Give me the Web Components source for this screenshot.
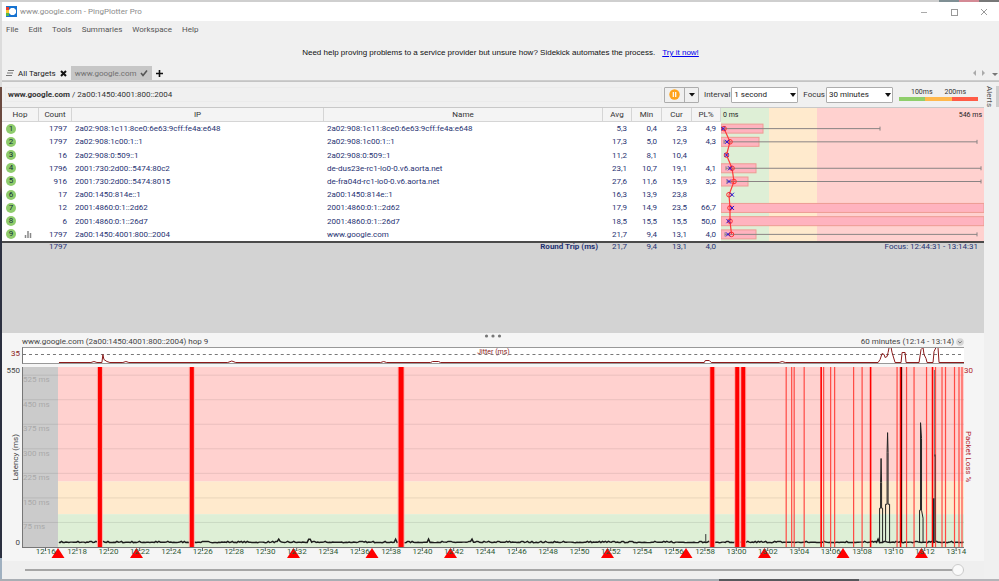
<!DOCTYPE html>
<html lang="en">
<head>
  <meta charset="utf-8">
  <title>www.google.com - PingPlotter Pro</title>
  <style>
    html, body {
      height: 100%;
    }

    body {
      margin: 0;
      font-family: Roboto, "Open Sans", sans-serif;
      font-size: 8px;
      line-height: 11px;
      color: #333;
      overflow: hidden;
    }
  </style>
</head>
<body>
  <ping-window>
    <title-bar slot="title">www.google.com - PingPlotter Pro</title-bar>
    <menu-bar slot="menu" items="File,Edit,Tools,Summaries,Workspace,Help"></menu-bar>
    <promo-banner slot="banner">
      Need help proving problems to a service provider but unsure how? Sidekick automates the process.
      <a slot="action" href="#sidekick">Try it now!</a>
    </promo-banner>
    <target-tabs slot="tabs"></target-tabs>
    <trace-toolbar><b>www.google.com</b> / 2a00:1450:4001:800::2004</trace-toolbar>
    <hop-table></hop-table>
    <timeline-panel></timeline-panel>
    <alerts-rail slot="side">Alerts</alerts-rail>
  </ping-window>

  <script>
    class PingElement extends HTMLElement {
      constructor() {
        super();
        this.attachShadow({ mode: "open" });
      }

      connectedCallback() {
        const template = document.createElement("template");
        template.innerHTML = this.markup();
        this.shadowRoot.replaceChildren(template.content);
      }
    }

    class PingWindow extends PingElement {
      markup() {
        return `
          <style>
            :host {
              display: block;
              box-sizing: border-box;
              height: 100vh;
              padding: 2px 0 2px 2px;
              background:
                linear-gradient(90deg, #a9aeb4 72%, #57585c 72% 86%, #b4b4b8 86%) bottom / 100% 2px no-repeat,
                linear-gradient(90deg, #cfcfcf 0 94%, #7f8f94 94% 96%, #d48a95 96% 98%, #777 98%) top / 100% 2px no-repeat,
                linear-gradient(#dcdcdc 0 15%, #6b4a40 15% 32%, #2b3040 34% 96%, #9fb0c0 96%);
            }

            .window {
              display: flex;
              flex-direction: column;
              height: 100%;
              background: #f0f0f0;
            }

            .work {
              flex: 1;
              min-height: 0;
              display: flex;
              border-top: 1px solid #c4c4c4;
            }

            .main {
              flex: 1;
              min-width: 0;
              display: flex;
              flex-direction: column;
            }
          </style>
          <div class="window">
            <slot name="title"></slot>
            <slot name="menu"></slot>
            <slot name="banner"></slot>
            <slot name="tabs"></slot>
            <div class="work">
              <div class="main"><slot></slot></div>
              <slot name="side"></slot>
            </div>
          </div>
        `;
      }
    }

    class TitleBar extends PingElement {
      markup() {
        return `
          <style>
            :host {
              display: flex;
              align-items: center;
              height: 19px;
              padding-left: 4px;
              background: #fff;
              color: #8c8c8c;
            }

            h1 {
              flex: 1;
              margin: 0 0 0 3px;
              font: inherit;
            }

            button {
              width: 30px;
              height: 19px;
              padding: 0;
              border: none;
              background: none;
            }

            svg {
              display: block;
              margin: auto;
            }
          </style>
          <svg style="margin: 0" width="11" height="11" viewBox="0 0 11 11">
            <rect width="11" height="11" fill="#1673d1"/>
            <rect y="1" width="3" height="3" fill="#e8402c"/>
            <rect y="4" width="3" height="3" fill="#f6c62f"/>
            <rect y="7" width="3" height="3" fill="#58b947"/>
            <path d="M5 2h3l2 2v3l-2 2h-3l-2-2v-3z" fill="#fff"/>
          </svg>
          <h1><slot></slot></h1>
          <button aria-label="Minimize"><svg width="8" height="8"><path d="M1 4.500h6" stroke="#aaa"/></svg></button>
          <button aria-label="Maximize"><svg width="8" height="8"><rect x="1.500" y="1.500" width="6" height="6" fill="none" stroke="#999"/></svg></button>
          <button aria-label="Close"><svg width="8" height="8"><path d="M1 1l6 6M7 1l-6 6" stroke="#999"/></svg></button>
        `;
      }
    }

    class MenuBar extends PingElement {
      markup() {
        const items = this.getAttribute("items").split(",");
        return `
          <style>
            :host {
              display: block;
            }

            nav {
              display: flex;
              gap: 10px;
              height: 16px;
              padding-left: 4px;
            }

            button {
              padding: 0;
              border: none;
              background: none;
              font: inherit;
              color: #555;
            }
          </style>
          <nav>${items.map((item) => `<button>${item}</button>`).join("")}</nav>
        `;
      }
    }

    class PromoBanner extends PingElement {
      markup() {
        return `
          <style>
            :host {
              display: flex;
              justify-content: center;
              align-items: center;
              gap: 7px;
              height: 27px;
              padding-top: 2px;
              font-family: "Liberation Sans", Arial, sans-serif;
              color: #111;
            }

            ::slotted(a) {
              color: #0000ee;
            }
          </style>
          <span><slot></slot></span>
          <slot name="action"></slot>
        `;
      }
    }

    class TargetTabs extends PingElement {
      markup() {
        return `
          <style>
            :host {
              display: flex;
              height: 14px;
              border-bottom: 1px solid #cdcdcd;
            }

            button {
              display: flex;
              align-items: center;
              gap: 4px;
              padding: 0 4px;
              border: none;
              background: none;
              font: inherit;
              color: #222;
            }

            .active {
              gap: 3px;
              background: #c6c6c6;
              color: #707070;
            }

            .arrows {
              display: flex;
              align-items: center;
              margin-left: auto;
            }

            .arrows button {
              padding: 0 3px;
            }
          </style>
          <button>
            <svg width="8" height="8"><path d="M2 1.500h6M1 4h6M0 6.500h6" stroke="#777"/></svg>
            All Targets
            <svg width="7" height="7"><path d="M1 1l5 5M6 1l-5 5" stroke="#111" stroke-width="2"/></svg>
          </button>
          <button class="active">
            www.google.com
            <svg width="8" height="8"><path d="M1 4l2 2.500l4-5" fill="none" stroke="#555" stroke-width="1.600"/></svg>
          </button>
          <button aria-label="Add target"><svg width="7" height="7"><path d="M3.500 0v7M0 3.500h7" stroke="#111" stroke-width="1.600"/></svg></button>
          <div class="arrows">
            <button aria-label="Previous tab"><svg width="4" height="6"><path d="M4 0v6l-3-3z" fill="#aaa"/></svg></button>
            <button aria-label="Next tab"><svg width="4" height="6"><path d="M0 0v6l3-3z" fill="#aaa"/></svg></button>
            <button aria-label="List tabs" style="padding-right: 1px"><svg width="6" height="5"><path d="M0 2h6l-3 3z" fill="#777"/></svg></button>
          </div>
        `;
      }
    }

    class TraceToolbar extends PingElement {
      markup() {
        return `
          <style>
            :host {
              display: flex;
              align-items: center;
              height: 25px;
              flex: none;
              border-bottom: 1px solid #c8c8c8;
              color: #333;
            }

            .path {
              flex: 1;
              margin: 0 2px 0 3px;
              padding: 1px 2px;
              border: 1px solid #ebebeb;
            }

            .split {
              display: flex;
              box-sizing: border-box;
              width: 35px;
              height: 16px;
              border: 1px solid #adadad;
              border-radius: 1px;
            }

            .split button {
              flex: 1;
              display: flex;
              align-items: center;
              justify-content: center;
              padding: 0;
              border: none;
              background: none;
            }

            .split button:first-child {
              flex: none;
              width: 20px;
              border-right: 1px solid #adadad;
            }

            label {
              margin-left: 5px;
            }

            .select {
              position: relative;
              margin-left: 1px;
            }

            .select::after {
              content: "";
              position: absolute;
              right: 2px;
              top: 6px;
              border: 3px solid transparent;
              border-top: 4px solid #111;
              border-bottom: none;
              pointer-events: none;
            }

            select {
              display: block;
              appearance: none;
              box-sizing: border-box;
              width: 67px;
              height: 16px;
              padding: 0 2px;
              border: 1px solid #adadad;
              border-radius: 1px;
              background: #fff;
              font: inherit;
              color: #222;
            }
          </style>
          <div class="path"><slot></slot></div>
          <div class="split">
            <button aria-label="Pause">
              <svg width="11" height="11" viewBox="0 0 11 11">
                <circle cx="5.500" cy="5.500" r="5.200" fill="#ffa31a"/>
                <path d="M4.300 3v5M6.700 3v5" stroke="#fff" stroke-width="1.200"/>
              </svg>
            </button>
            <button aria-label="Pause options"><svg width="6" height="4"><path d="M0 0h6l-3 3.500z" fill="#111"/></svg></button>
          </div>
          <label for="interval">Interval</label>
          <span class="select"><select id="interval"><option>1 second</option></select></span>
          <label for="focus">Focus</label>
          <span class="select"><select id="focus"><option>30 minutes</option></select></span>
          <latency-legend></latency-legend>
        `;
      }
    }

    class LatencyLegend extends PingElement {
      markup() {
        return `
          <style>
            :host {
              display: block;
              width: 79px;
              margin: 0 6px;
              font-size: 7px;
              line-height: 9px;
            }

            .labels {
              display: flex;
              justify-content: space-evenly;
            }

            .bar {
              height: 4px;
              background: linear-gradient(90deg, #8fce6b 33%, #ffb84d 33% 67%, #ff5c47 67%);
            }
          </style>
          <div class="labels"><span>100ms</span><span>200ms</span></div>
          <div class="bar"></div>
        `;
      }
    }

    const IP1 = "2a02:908:1c11:8ce0:6e63:9cff:fe4a:e648";

    // cur and avg are x positions of the marks, bar and whisker are [from, to]
    const HOPS = [
      { count: 1797, ip: IP1, name: IP1, v: ["5,3", "0,4", "2,3", "4,9"], avg: 3, cur: 2, bar: 42, whisker: [1, 159] },
      { count: 1797, ip: "2a02:908:1c00:1::1", name: "2a02:908:1c00:1::1", v: ["17,3", "5,0", "12,9", "4,3"], avg: 9, cur: 6, bar: 38, whisker: [3, 256] },
      { count: 16, ip: "2a02:908:0:509::1", name: "2a02:908:0:509::1", v: ["11,2", "8,1", "10,4", ""], avg: 5.5, cur: 5.5 },
      { count: 1796, ip: "2001:730:2d00::5474:80c2", name: "de-dus23e-rc1-lo0-0.v6.aorta.net", v: ["23,1", "10,7", "19,1", "4,1"], avg: 11, cur: 9, bar: 35, whisker: [5, 260] },
      { count: 916, ip: "2001:730:2d00::5474:8015", name: "de-fra04d-rc1-lo0-0.v6.aorta.net", v: ["27,6", "11,6", "15,9", "3,2"], avg: 13, cur: 8, bar: 27, whisker: [6, 260] },
      { count: 17, ip: "2a00:1450:814e::1", name: "2a00:1450:814e::1", v: ["16,3", "13,9", "23,8", ""], avg: 8, cur: 11 },
      { count: 12, ip: "2001:4860:0:1::2d62", name: "2001:4860:0:1::2d62", v: ["17,9", "14,9", "23,5", "66,7"], avg: 9, cur: 11, bar: 263 },
      { count: 6, ip: "2001:4860:0:1::26d7", name: "2001:4860:0:1::26d7", v: ["18,5", "15,5", "15,5", "50,0"], avg: 9, cur: 7.5, bar: 263 },
      { count: 1797, ip: "2a00:1450:4001:800::2004", name: "www.google.com", v: ["21,7", "9,4", "13,1", "4,0"], avg: 10.5, cur: 7, bar: 35, whisker: [4, 256], graphed: true },
    ];

    class HopTable extends PingElement {
      rows() {
        return HOPS.map((hop, i) => `
          <tr>
            <td><span class="hop"><i>${i + 1}</i>${hop.graphed ? this.chartIcon() : ""}</span></td>
            <td class="num">${hop.count}</td>
            <td>${hop.ip}</td>
            <td>${hop.name}</td>
            ${hop.v.map((v) => `<td class="num">${v}</td>`).join("")}
            ${i === 0 ? `<td class="graph" rowspan="9">${this.graph()}</td>` : ""}
          </tr>
        `).join("");
      }

      chartIcon() {
        return `<svg width="8" height="8"><path d="M1.500 8v-3M4 8v-7M6.500 8v-5" stroke="#888" stroke-width="1.500"/></svg>`;
      }

      graph() {
        const step = 119 / 9;
        const y = (i) => step * i + step / 2;
        const marks = HOPS.map((hop, i) => {
          let out = "";
          if (hop.bar) {
            out += `<rect x="0" y="${y(i) - 4.5}" width="${hop.bar}" height="9" fill="#ffb3bf" stroke="#ee9c94"/>`;
          }
          if (hop.whisker) {
            const [a, b] = hop.whisker;
            out += `<path d="M${a} ${y(i)}H${b}M${a} ${y(i) - 2}v4M${b} ${y(i) - 2}v4" stroke="#8a8484" fill="none"/>`;
          }
          return out;
        }).join("");
        const line = HOPS.map((hop, i) => `${hop.avg},${y(i)}`).join(" ");
        const points = HOPS.map((hop, i) => `
          <circle cx="${hop.avg}" cy="${y(i)}" r="2.300" fill="none" stroke="#ff2d2d"/>
          <path d="M${hop.cur - 2} ${y(i) - 2}l4 4m0-4l-4 4" stroke="#1d12d8"/>
        `).join("");
        return `
          <svg viewBox="0 0 263 119" preserveAspectRatio="none">
            ${marks}
            <polyline points="${line}" fill="none" stroke="#ff3a3a" stroke-width="1.200"/>
            ${points}
          </svg>
        `;
      }

      markup() {
        return `
          <style>
            :host {
              display: block;
              flex: 225 1 0;
              min-height: 0;
              overflow: hidden;
              background: #d3d3d3;
              --zones: linear-gradient(90deg, #deefd6 18.3%, #ffeacd 18.3% 36.6%, #ffd1cf 36.6%);
            }

            table {
              width: 100%;
              table-layout: fixed;
              border-collapse: separate;
              border-spacing: 0;
              color: #1f3272;
            }

            th, td {
              padding: 0 3px;
              text-align: left;
              white-space: nowrap;
              overflow: hidden;
            }

            thead th {
              box-sizing: border-box;
              height: 14px;
              border-right: 1px solid #d5d5d5;
              border-bottom: 1px solid #d5d5d5;
              background: #f4f4f4;
              color: #333;
              font-weight: normal;
              text-align: center;
            }

            thead .scale {
              padding: 0 2px;
              border: none;
              background: var(--zones);
              font-size: 7px;
              color: #222;
            }

            .scale div {
              display: flex;
              justify-content: space-between;
            }

            tbody td {
              height: 13px;
              background: #fff;
            }

            .num {
              padding-right: 5px;
              text-align: right;
            }

            tbody .graph {
              padding: 0;
              background: var(--zones);
            }

            .graph svg {
              display: block;
              width: 100%;
              height: 119px;
            }

            .hop {
              display: flex;
              align-items: center;
              gap: 8px;
              padding-left: 1px;
            }

            i {
              width: 10px;
              height: 10px;
              line-height: 10px;
              border-radius: 50%;
              background: #8fcc6c;
              color: #12303a;
              font-style: normal;
              text-align: center;
            }

            tfoot td, tfoot th {
              height: 8px;
              border-top: 2px solid #4a4a4a;
              line-height: 8px;
            }

            tfoot th {
              padding-right: 5px;
              text-align: right;
            }

            tfoot td:last-child {
              padding-right: 6px;
              text-align: right;
            }
          </style>
          <table>
            <colgroup>
              <col style="width: 37px"><col style="width: 33px"><col style="width: 252px"><col>
              <col style="width: 29px"><col style="width: 30px"><col style="width: 30px"><col style="width: 29px">
              <col style="width: 263px">
            </colgroup>
            <thead>
              <tr>
                <th>Hop</th><th>Count</th><th>IP</th><th>Name</th>
                <th>Avg</th><th>Min</th><th>Cur</th><th>PL%</th>
                <th class="scale"><div><span>0 ms</span><span>546 ms</span></div></th>
              </tr>
            </thead>
            <tbody>${this.rows()}</tbody>
            <tfoot>
              <tr>
                <td></td><td class="num">1797</td><td></td><th>Round Trip (ms)</th>
                <td class="num">21,7</td><td class="num">9,4</td><td class="num">13,1</td><td class="num">4,0</td>
                <td>Focus: 12:44:31 - 13:14:31</td>
              </tr>
            </tfoot>
          </table>
        `;
      }
    }

    // the plot is 942 units wide, two minutes are 31.4 units
    const WIDE_LOSS = [[75, 4], [167, 4], [376, 5], [688, 4], [713, 4], [719, 4]];
    const THIN_LOSS = [764, 769.5, 772, 782, 801.5, 808.5, 812.5, 831.5, 840, 875, 884.5, 892, 904.5, 913.5, 920, 923.5, 932.5, 937, 940];
    const SOLID_LOSS = [799, 848.5, 878.5, 910.5];
    const ROUTE_CHANGES = [36, 114.5, 271.5, 350, 428.5, 585.5, 664, 742.5, 821, 899.5];

    class TimelinePanel extends PingElement {
      latencyPath() {
        let seed = 7;
        const random = () => (seed = (seed * 16807) % 2147483647) / 2147483647;
        let d = "M36 176";
        for (let x = 37; x < 942; x += 1.5) {
          const r = random();
          const up = r > 0.985 ? 3.5 : r > 0.8 ? 1.2 : r * 0.7;
          d += `L${x} ${(176.6 - up).toFixed(1)}`;
        }
        return d;
      }

      jitterPath() {
        return `M36 14.500H68l3-1l3 1H79l1-8l1 5l3 2l3 1H100l3-1l3 1H205l4-1.500l4 1.500H358l3-1l3 1H408l2-1h6l2 1
          H682l1-2h4l2 2H757l3-1l3 1H856l2-3l2-6l2 1l1 3l2-1l1-4l1-5h2l1 5l3 10H879l1-10h3l1 10H897l2-13l2-2l1 7l2 4l1 4
          H911l1-11l2-4h2l1 15H942`;
      }

      markup() {
        const grid = [525, 450, 375, 300, 225, 150, 75];
        const gridY = (v) => (1 - v / 550) * 181;
        const times = Array.from({ length: 30 }, (_, i) => {
          const minutes = 16 + i * 2;
          return `${12 + Math.floor(minutes / 60)}:${String(minutes % 60).padStart(2, "0")}`;
        });
        return `
          <style>
            :host {
              flex: 246 1 0;
              min-height: 0;
              display: grid;
              grid-template-columns: 20px minmax(0, 1fr) 20px;
              grid-template-rows: 14px 17px 3px minmax(0, 1fr) 14px 18px;
              position: relative;
              background: #f5f5f5;
              color: #444;
            }

            svg {
              display: block;
              width: 100%;
              height: 100%;
            }

            .dots {
              position: absolute;
              top: 1px;
              left: 50%;
              width: 17px;
              height: 4px;
              transform: translateX(-50%);
            }

            header {
              grid-column: 2;
              display: flex;
              justify-content: space-between;
              align-items: end;
            }

            .range {
              display: flex;
              align-items: center;
              gap: 2px;
              padding: 0;
              border: none;
              background: none;
              font: inherit;
              color: inherit;
            }

            .range svg {
              width: 8px;
              height: 8px;
            }

            .jitter-max {
              grid-area: 2 / 1;
              padding: 1px 2px 0 0;
              text-align: right;
              color: #8b1a1a;
            }

            .jitter, .latency {
              grid-column: 2;
              position: relative;
              box-sizing: border-box;
              border-left: 1px solid #777;
            }

            .jitter {
              grid-row: 2;
              border-top: 1px solid #999;
              border-bottom: 1px solid #999;
              background: #fff;
            }

            .jitter span {
              position: absolute;
              top: 0;
              left: 50%;
              transform: translateX(-50%);
              font-size: 7px;
              line-height: 8px;
              color: #8b1a1a;
            }

            .latency {
              grid-row: 4;
            }

            .latency span {
              position: absolute;
              left: 0;
              color: #a9a9a9;
            }

            .scale {
              grid-row: 4;
              display: flex;
              flex-direction: column;
              justify-content: space-between;
              align-items: end;
              padding-right: 2px;
              line-height: 8px;
            }

            .vertical {
              writing-mode: vertical-rl;
            }

            .left {
              transform: rotate(180deg);
            }

            .loss {
              grid-area: 4 / 3;
              display: grid;
              grid-template-rows: 1fr auto 1fr;
              justify-items: start;
              line-height: 8px;
              color: #b3262e;
            }

            .axis {
              grid-area: 5 / 2;
              position: relative;
              border-top: 1px solid #777;
            }

            .axis svg {
              position: absolute;
              inset: 0;
            }

            ol {
              position: relative;
              display: grid;
              grid-template-columns: repeat(30, minmax(0, 1fr));
              margin: 0 -8px 0 8px;
              padding: 0;
              list-style: none;
              text-align: center;
              line-height: 8px;
              color: #2f5a35;
            }

            footer {
              grid-area: 6 / 1 / 7 / 4;
              padding: 0 20px 0 23px;
              display: flex;
              align-items: center;
              background: #efefef;
            }

            input {
              appearance: none;
              flex: 1;
              height: 12px;
              margin: 0;
              background: linear-gradient(#a6a6a6, #a6a6a6) center / 100% 2px no-repeat;
            }

            input::-webkit-slider-thumb {
              appearance: none;
              width: 12px;
              height: 12px;
              border: 1px solid #ccc;
              border-radius: 50%;
              background: #fafafa;
            }
          </style>
          <svg class="dots"><g fill="#777"><circle cx="2" cy="2" r="1.600"/><circle cx="8.500" cy="2" r="1.600"/><circle cx="15" cy="2" r="1.600"/></g></svg>
          <header>
            <span>www.google.com (2a00:1450:4001:800::2004) hop 9</span>
            <button class="range">
              60 minutes (12:14 - 13:14)
              <svg viewBox="0 0 8 8"><circle cx="4" cy="4" r="3.800" fill="#d6d6d6"/><path d="M2.200 3.300l1.800 1.800l1.800-1.800" fill="none" stroke="#777"/></svg>
            </button>
          </header>
          <div class="jitter-max">35</div>
          <div class="jitter">
            <svg viewBox="0 0 942 15" preserveAspectRatio="none">
              <path d="M0 6.500H942" stroke="#777" stroke-dasharray="3 3"/>
              <path d="${this.jitterPath()}" fill="none" stroke="#8b1a1a"/>
            </svg>
            <span>Jitter (ms)</span>
          </div>
          <div class="scale">
            <span>550</span>
            <span class="vertical left">Latency (ms)</span>
            <span>0</span>
          </div>
          <div class="latency">
            <svg viewBox="0 0 942 181" preserveAspectRatio="none">
              <rect width="942" height="115" fill="#ffd1cf"/>
              <rect y="115" width="942" height="33" fill="#ffeacd"/>
              <rect y="148" width="942" height="33" fill="#deefd6"/>
              <rect width="35" height="181" fill="#cbcbcb"/>
              <path d="${grid.map((v) => `M0 ${gridY(v)}H942`).join("")}" stroke="#000" stroke-opacity=".09"/>
              <path d="${this.latencyPath()}" fill="none" stroke="#1c1c1c" stroke-width="1.500"/>
              <path d="M683.500 176v-8" stroke="#333"/>
              ${WIDE_LOSS.map(([x, w]) => `<rect x="${x - 1}" width="${w + 2}" height="181" fill="#ffb0ac"/><rect x="${x}" width="${w}" height="181" fill="#f00"/>`).join("")}
              <path d="${THIN_LOSS.map((x) => `M${x} 0V181`).join("")}" stroke="#ff4a44" stroke-width="1.200"/>
              <path d="${SOLID_LOSS.map((x) => `M${x} 0V181`).join("")}" stroke="#f00" stroke-width="1.600"/>
              <g fill="none" stroke="#222">
                <path d="M857.500 176V142h1V116l.5-24l.5 24v26h1v34M863.500 176V138h1.500V86l.5-20l.5 20v52h1.500v38"/>
                <path d="M897.500 176V144h1V56l1 16v72l1.500 8v24"/>
              </g>
              <path d="M879.500 0V176" stroke="#5a0000" stroke-width="1.200"/>
              <path d="M912.500 3V90" stroke="#777"/>
              <path d="M913 88V176M911.500 176V132" stroke="#222"/>
              <path d="M912.500 132v44" stroke="#555"/>
            </svg>
            ${grid.map((v) => `<span style="top: calc(${(1 - v / 550) * 100}% - 1px)">${v} ms</span>`).join("")}
          </div>
          <div class="loss">
            <span>30</span>
            <span class="vertical">Packet Loss %</span>
          </div>
          <div class="axis">
            <svg viewBox="0 0 942 13" preserveAspectRatio="none" overflow="visible">
              <path d="${times.map((t, i) => `M${23.5 + i * 31.4} 0v3`).join("")}" stroke="#666"/>
              <path d="${ROUTE_CHANGES.map((x) => `M${x} 0l6.500 10h-13z`).join("")}" fill="#f00"/>
            </svg>
            <ol>${times.map((t) => `<li>${t}</li>`).join("")}</ol>
          </div>
          <footer><input type="range" aria-label="Timeline position" min="0" max="60" value="60"></footer>
        `;
      }
    }

    class AlertsRail extends PingElement {
      markup() {
        return `
          <style>
            :host {
              display: flex;
              justify-content: space-between;
              width: 15px;
              padding-top: 4px;
              box-sizing: border-box;
              color: #555;
            }

            button {
              align-self: start;
              padding: 0;
              border: none;
              background: none;
              writing-mode: vertical-rl;
              font: inherit;
              color: inherit;
            }

            div {
              width: 3px;
              height: 21px;
              background: #cdcdcd;
            }
          </style>
          <button><slot></slot></button>
          <div></div>
        `;
      }
    }

    customElements.define("ping-window", PingWindow);
    customElements.define("title-bar", TitleBar);
    customElements.define("menu-bar", MenuBar);
    customElements.define("promo-banner", PromoBanner);
    customElements.define("target-tabs", TargetTabs);
    customElements.define("latency-legend", LatencyLegend);
    customElements.define("trace-toolbar", TraceToolbar);
    customElements.define("hop-table", HopTable);
    customElements.define("timeline-panel", TimelinePanel);
    customElements.define("alerts-rail", AlertsRail);
  </script>
</body>
</html>
